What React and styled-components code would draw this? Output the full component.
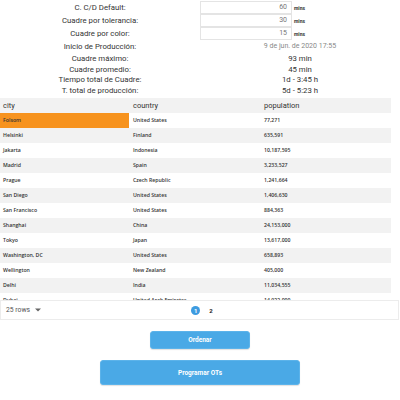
import styled, { createGlobalStyle } from 'styled-components';

const Global = createGlobalStyle`
  body {
    margin: 0;
    background: #fff;
    font-family: Roboto, 'Liberation Sans', sans-serif;
    color: #222;
  }
`;

const Page = styled.div`
  width: 400px;
  height: 400px;
  overflow: hidden;
  display: flex;
  flex-direction: column;
`;

const Summary = styled.div`
  display: grid;
  grid-template-columns: 200px 200px;
  padding-top: 1px;
`;

const Label = styled.div`
  text-align: center;
  font-size: 7.8px;
  color: #333;
  height: ${p => p.$h}px;
  line-height: ${p => p.$h}px;
  margin-top: ${p => p.$gap || 0}px;
`;

const Value = styled.div`
  text-align: center;
  color: ${p => (p.$muted ? '#888' : '#333')};
  font-size: ${p => (p.$muted ? 7 : 7.8)}px;
  height: ${p => p.$h}px;
  line-height: ${p => p.$h}px;
  margin-top: ${p => p.$gap || 0}px;
`;

const InputCell = styled.div`
  display: flex;
  align-items: center;
  height: 13px;
`;

const Field = styled.div`
  width: 92px;
  height: 13px;
  box-sizing: border-box;
  border: 1px solid #e4e4e4;
  margin-top: ${p => (p.$first ? 0 : -1)}px;
  text-align: right;
  padding-right: 4px;
  font-size: 7px;
  line-height: 11px;
  color: #777;
`;

const Unit = styled.span`
  font-size: 5px;
  font-weight: 700;
  color: #333;
  margin-left: 2px;
`;

const Scroll = styled.div`
  margin-top: 2px;
  height: 202px;
  overflow: hidden;
  width: 391px;
`;

const Table = styled.div`
  display: grid;
  grid-template-columns: 130px 131px 130px;
`;

const Head = styled.div`
  background: #f2f2f2;
  height: 15px;
  line-height: 15px;
  padding-left: 3px;
  font-size: 7.5px;
  color: #333;
`;

const Cell = styled.div`
  height: 15px;
  line-height: 15px;
  padding-left: 3px;
  font-family: 'Open Sans', sans-serif;
  font-size: 5.2px;
  font-weight: 600;
  color: #333;
  background: ${p => (p.$hl ? '#f7931e' : p.$odd ? '#f2f2f2' : '#fff')};
  box-shadow: ${p => (p.$hl ? 'inset -1px 0 0 #fff' : 'none')};
`;

const Footer = styled.div`
  width: 399px;
  height: 20px;
  box-sizing: border-box;
  border: 1px solid #ececec;
  display: grid;
  grid-template-columns: 1fr auto 1fr;
  align-items: center;
  padding-left: 5px;
`;

const RowsSelect = styled.div`
  display: flex;
  align-items: center;
  font-size: 6.8px;
  color: #555;
  gap: 5px;
`;

const Pager = styled.div`
  display: flex;
  align-items: center;
  gap: 9px;
`;

const Page1 = styled.span`
  width: 9px;
  height: 9px;
  border-radius: 50%;
  background: #3d9be0;
  color: #fff;
  font-size: 6px;
  font-weight: 700;
  display: flex;
  align-items: center;
  justify-content: center;
`;

const PageN = styled.span`
  font-size: 6px;
  font-weight: 700;
  color: #222;
`;

const Actions = styled.div`
  display: flex;
  flex-direction: column;
  align-items: center;
  gap: 11px;
  margin-top: 11px;
`;

const Button = styled.button`
  width: ${p => p.$w}px;
  height: ${p => p.$h}px;
  background: #4aa9e6;
  border: 1px solid #5cb3ea;
  border-radius: 3px;
  box-shadow: 0 1px 1px rgba(0, 0, 0, 0.12);
  color: #fff;
  font-family: Roboto, sans-serif;
  font-weight: 700;
  font-size: 6.5px;
  padding: 0;
`;

const data = [
  ['Folsom', 'United States', '77,271'],
  ['Helsinki', 'Finland', '635,591'],
  ['Jakarta', 'Indonesia', '10,187,595'],
  ['Madrid', 'Spain', '3,233,527'],
  ['Prague', 'Czech Republic', '1,241,664'],
  ['San Diego', 'United States', '1,406,630'],
  ['San Francisco', 'United States', '884,363'],
  ['Shanghai', 'China', '24,153,000'],
  ['Tokyo', 'Japan', '13,617,000'],
  ['Washington, DC', 'United States', '658,893'],
  ['Wellington', 'New Zealand', '405,000'],
  ['Delhi', 'India', '11,034,555'],
  ['Dubai', 'United Arab Emirates', '14,922,000'],
];

export default function App() {
  return (
    <Page>
      <Global />
      <Summary>
        <div>
          <Label $h={13}>C. C/D Default:</Label>
          <Label $h={13}>Cuadre por tolerancia:</Label>
          <Label $h={13}>Cuadre por color:</Label>
          <Label $h={13}>Inicio de Producción:</Label>
          <Label $h={10.5} $gap={1}>Cuadre máximo:</Label>
          <Label $h={10.5}>Cuadre promedio:</Label>
          <Label $h={10.5}>Tiempo total de Cuadre:</Label>
          <Label $h={10.5}>T. total de producción:</Label>
        </div>
        <div>
          <InputCell><Field $first>60</Field><Unit>mins</Unit></InputCell>
          <InputCell><Field>30</Field><Unit>mins</Unit></InputCell>
          <InputCell><Field>15</Field><Unit>mins</Unit></InputCell>
          <Value $h={13} $muted>9 de jun. de 2020 17:55</Value>
          <Value $h={10.5} $gap={1}>93 min</Value>
          <Value $h={10.5}>45 min</Value>
          <Value $h={10.5}>1d - 3:45 h</Value>
          <Value $h={10.5}>5d - 5:23 h</Value>
        </div>
      </Summary>
      <Scroll>
        <Table>
          <Head>city</Head>
          <Head>country</Head>
          <Head>population</Head>
          {data.map((r, i) => [
            <Cell key={i + 'a'} $hl={i === 0} $odd={i % 2 === 1}>{r[0]}</Cell>,
            <Cell key={i + 'b'} $odd={i % 2 === 1}>{r[1]}</Cell>,
            <Cell key={i + 'c'} $odd={i % 2 === 1}>{r[2]}</Cell>,
          ])}
        </Table>
      </Scroll>
      <Footer>
        <RowsSelect>
          25 rows
          <svg width="6" height="4" viewBox="0 0 6 4"><path d="M0 0.5h6L3 3.5z" fill="#666" /></svg>
        </RowsSelect>
        <Pager>
          <Page1>1</Page1>
          <PageN>2</PageN>
        </Pager>
        <span />
      </Footer>
      <Actions>
        <Button $w={100} $h={18}>Ordenar</Button>
        <Button $w={200} $h={25}>Programar OTs</Button>
      </Actions>
    </Page>
  );
}
